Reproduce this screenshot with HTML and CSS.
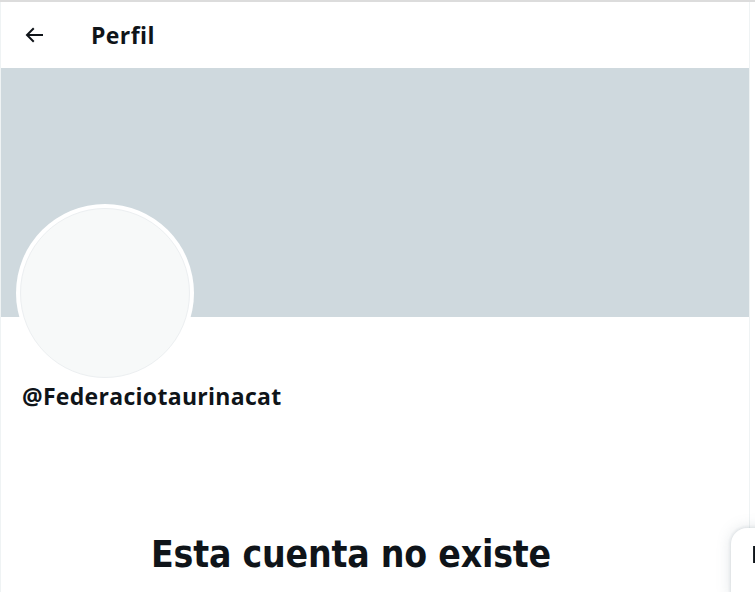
FILE: index.html
```html
<!DOCTYPE html>
<html lang="es">
<head>
  <meta charset="UTF-8" />
  <meta name="viewport" content="width=device-width, initial-scale=1.0" />
  <title>Perfil</title>
  <link rel="stylesheet" href="styles.css">
</head>
<body>
  <main class="column">
    <header class="topbar">
      <button class="back-btn" aria-label="Atrás">
        <svg viewBox="0 0 24 24" width="24" height="24"><path d="M7.414 13l5.043 5.04-1.414 1.42L3.586 12l7.457-7.46 1.414 1.42L7.414 11H21v2H7.414z"></path></svg>
      </button>
      <h1>Perfil</h1>
    </header>
    <div class="banner"></div>
    <section class="profile">
      <div class="avatar"><div class="avatar-inner"></div></div>
      <div class="handle">@Federaciotaurinacat</div>
    </section>
    <section class="empty">
      <h2>Esta cuenta no existe</h2>
      <p>Intenta hacer otra búsqueda.</p>
    </section>
  </main>
  <!-- messages drawer, sits over the page -->
  <div class="drawer">
    <span>Mensajes</span>
  </div>
</body>
</html>
```

FILE: styles.css
```css
/* Global Styles */
body {
  background-color: #fff;
  color: #0f1419;
  font-family: "Open Sans", Arial, sans-serif;
  margin: 0;
  padding: 0;
  border-top: 2px solid #dcdcdc;
  overflow: hidden;
}
.column {
  width: 748px;
  min-height: 590px;
  border-left: 1px solid #eff3f4;
  border-right: 1px solid #eff3f4;
}
.topbar {
  height: 66px;
  display: flex;
  align-items: center;
  padding-left: 21px;
}
.back-btn {
  background: none;
  border: none;
  padding: 0;
  width: 24px;
  height: 24px;
  margin-right: 45px;
}
.back-btn svg {
  display: block;
  fill: #0f1419;
}
.topbar h1 {
  margin: 0;
  font-size: 23px;
  font-weight: 700;
  letter-spacing: 0.4px;
  line-height: 28px;
}
.banner {
  height: 249px;
  background-color: #cfd9de;
}
.profile {
  padding-left: 15px;
}
.avatar {
  width: 178px;
  height: 178px;
  margin-top: -113px;
  padding: 4px;
  box-sizing: border-box;
  border-radius: 50%;
  background-color: #fff;
}
.avatar-inner {
  width: 100%;
  height: 100%;
  box-sizing: border-box;
  border-radius: 50%;
  background-color: #f7f9f9;
  border: 1px solid #eceff1;
}
.handle {
  margin-left: 6px;
  margin-top: 2px;
  font-size: 23px;
  font-weight: 700;
  letter-spacing: 0.3px;
  line-height: 24px;
}
.empty {
  width: 420px;
  margin-left: 150px;
  padding-top: 125px;
}
.empty h2 {
  margin: 0;
  font-family: "DejaVu Sans Condensed", "DejaVu Sans", sans-serif;
  font-stretch: condensed;
  font-size: 37px;
  font-weight: 700;
  letter-spacing: -0.2px;
  line-height: 44px;
  white-space: nowrap;
}
.empty p {
  margin: 11px 0 0;
  color: #536471;
  font-size: 15.5px;
  line-height: 20px;
  white-space: nowrap;
}
.drawer {
  position: fixed;
  left: 731px;
  top: 528px;
  width: 400px;
  height: 70px;
  padding-left: 20px;
  padding-top: 12px;
  box-sizing: border-box;
  background-color: #fff;
  border-radius: 16px 16px 0 0;
  box-shadow: rgba(101, 119, 134, 0.2) 0 0 15px, rgba(101, 119, 134, 0.15) 0 0 3px 1px;
  font-size: 23px;
  font-weight: 700;
  line-height: 28px;
}
```
